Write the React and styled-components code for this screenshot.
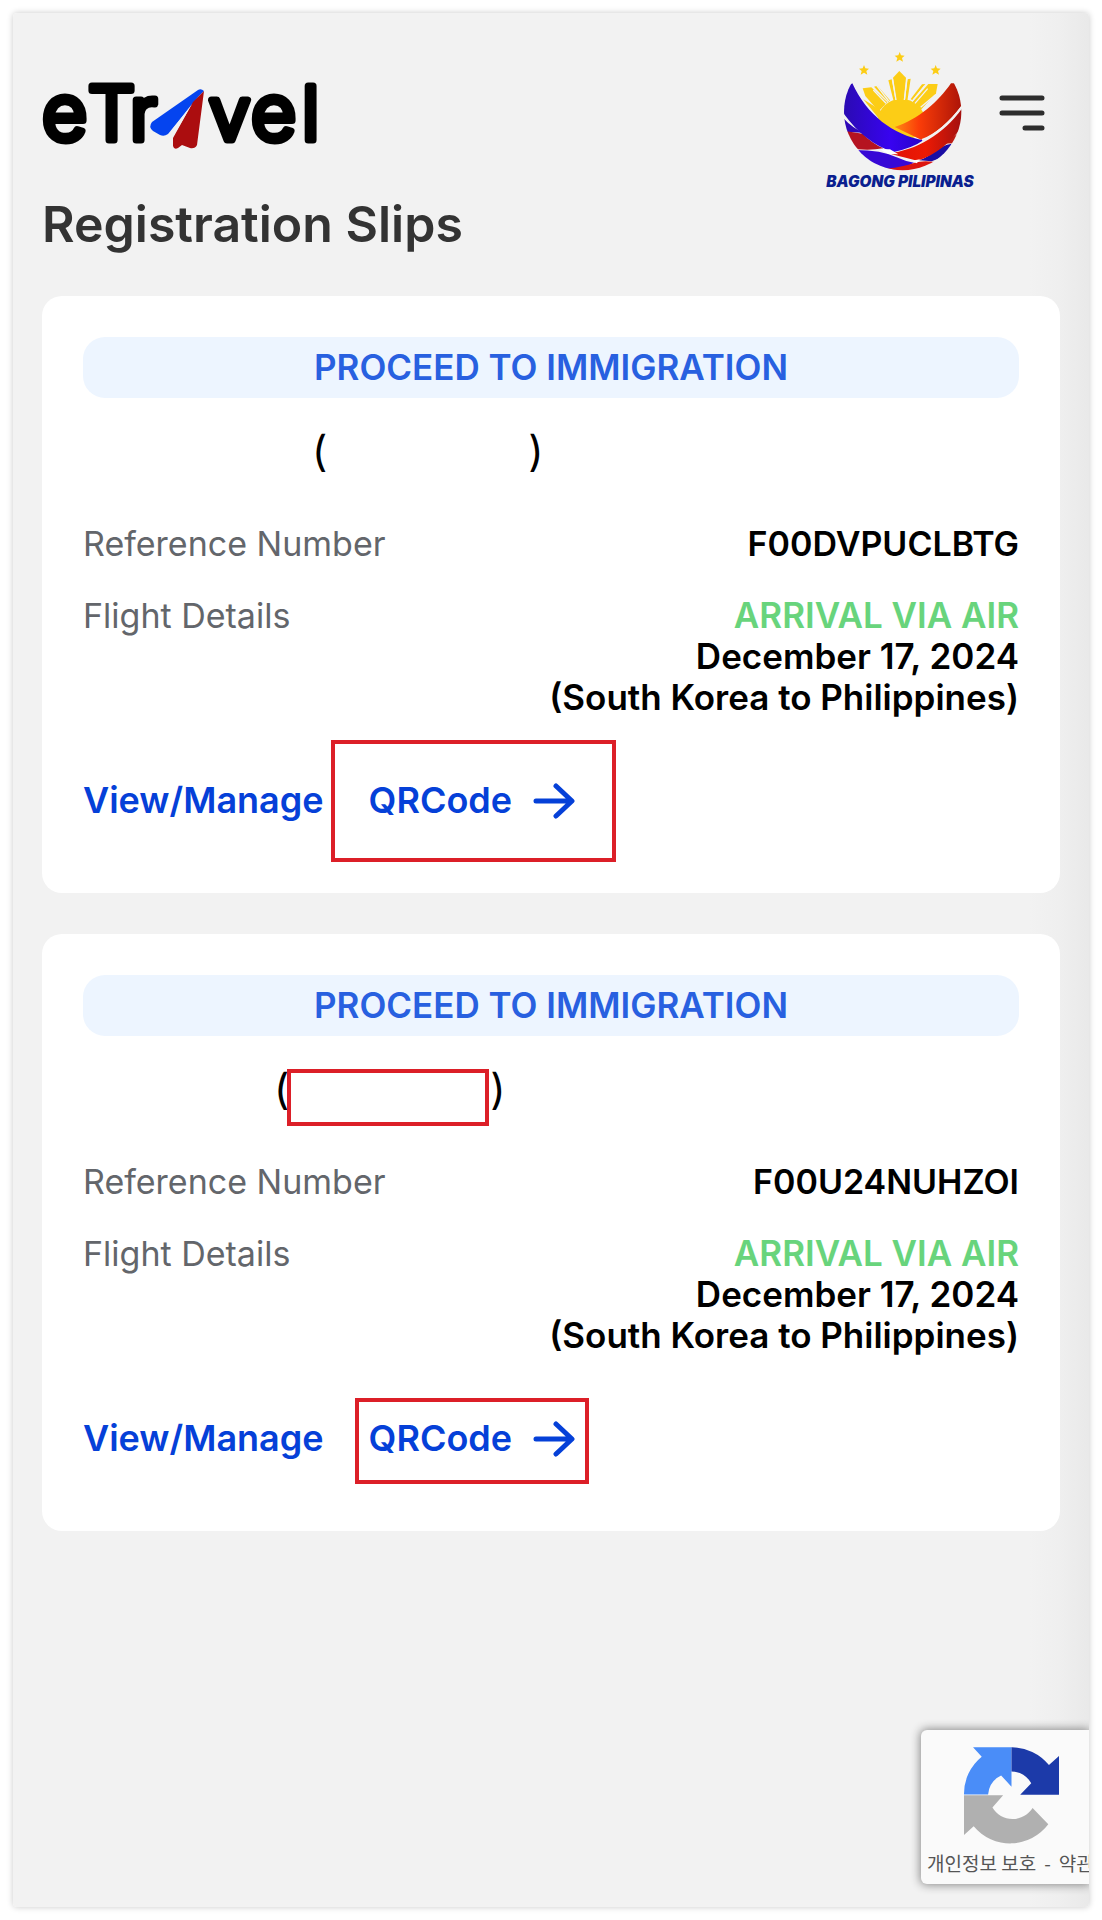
import React from 'react';
import styled, { createGlobalStyle } from 'styled-components';

const GlobalStyle = createGlobalStyle`
  *, *::before, *::after {
    box-sizing: border-box;
  }

  body {
    margin: 0;
    background: #fff;
    color: #000;
    font-family: Inter, "Noto Sans CJK KR", sans-serif;
  }

  h1, h2, p, dl, dt, dd {
    margin: 0;
  }
`;

const Screen = styled.div`
  position: relative;
  min-height: calc(100vh - 26px);
  margin: 13px;
  padding: 39px 29px;
  overflow: hidden;
  background: linear-gradient(to left, #e9e9e9, #efefef 30px, #f2f2f2 60px);
`;

const Page = styled.div`
  display: flow-root;

  ${Screen} {
    border-radius: 4px;
    box-shadow: 0 0 6px rgba(0, 0, 0, 0.22);
  }
`;

const Header = styled.header`
  display: flex;
  align-items: center;
  justify-content: space-between;
`;

const HeaderRight = styled.div`
  display: flex;
  align-items: center;
  gap: 23px;
  padding-right: 15px;
`;

const HomeLink = styled.a`
  display: block;

  svg {
    display: block;
    overflow: visible;
  }
`;

const LogoText = styled.text`
  font-family: Inter, sans-serif;
  font-size: ${({ $size }) => $size}px;
  font-weight: 300;
  fill: #000;
  stroke: #000;
  stroke-width: 7px;
  stroke-linejoin: round;
`;

const EmblemText = styled.text`
  font-family: Inter, sans-serif;
  font-size: 46px;
  font-style: italic;
  font-weight: 900;
  fill: #0b1f8f;
`;

const MenuButton = styled.button`
  padding: 0 0 16px;
  border: 0;
  background: none;
  cursor: pointer;

  svg {
    display: block;
  }
`;

const Title = styled.h1`
  margin: 4px 0 42px;
  color: #333;
  font-size: 50px;
  font-weight: 600;
  line-height: 60px;
`;

const SlipList = styled.main`
  display: flex;
  flex-direction: column;
  gap: 41px;
`;

const Card = styled.article`
  padding: 41px;
  border-radius: 20px;
  background: #fff;
`;

const Status = styled.p`
  padding: 10px;
  border-radius: 22px;
  background: #edf5ff;
  color: #2860e0;
  font-size: 35px;
  font-weight: 600;
  line-height: 41px;
  text-align: center;
`;

const Name = styled.h2`
  display: flex;
  margin: 29px 0 48px;
  font-size: 42px;
  font-weight: 400;
  line-height: 48px;
`;

const NameBlank = styled.span`
  flex: 0 0 ${({ $width }) => $width}px;
`;

const PassportBlank = styled.span`
  position: relative;
  flex: 0 0 201px;
`;

const Mark = styled.span`
  position: absolute;
  inset: ${({ $inset }) => $inset};
  border: 4px solid #dc1f28;
  pointer-events: none;
`;

const Details = styled.dl`
  display: flex;
  flex-direction: column;
  gap: 31px;
`;

const DetailRow = styled.div`
  display: flex;
  justify-content: space-between;
  font-size: 34px;
  line-height: 41px;
`;

const Label = styled.dt`
  color: #63666b;
`;

const Value = styled.dd`
  font-size: ${({ $code }) => ($code ? 34 : 35)}px;
  font-weight: 600;
  text-align: right;
`;

const Arrival = styled.p`
  color: #68d47c;
`;

const Actions = styled.nav`
  display: flex;
  gap: 45px;
  margin-top: 31px;
  padding: 31px 0;
`;

const ActionLink = styled.a`
  position: relative;
  display: flex;
  align-items: center;
  gap: 21px;
  color: #0540d8;
  font-size: 36px;
  font-weight: 600;
  line-height: 41px;
  text-decoration: none;
`;

const CaptchaBadge = styled.aside`
  position: absolute;
  right: 0;
  bottom: 23px;
  width: 168px;
  height: 154px;
  padding: 16px 0 0 6px;
  border-radius: 6px 0 0 6px;
  background: #fafafa;
  box-shadow: 0 0 10px 1px #888;
  overflow: hidden;
  white-space: nowrap;

  svg {
    display: block;
    margin-left: 36px;
  }
`;

const CaptchaLinks = styled.p`
  display: flex;
  gap: 8px;
  margin-top: 3px;
  color: #555;
  font-family: "Noto Sans CJK KR", sans-serif;
  font-size: 19px;
  line-height: 30px;

  a {
    color: inherit;
    text-decoration: none;
  }
`;

const Logo = () => (
    <svg width="280" height="124" viewBox="42 59 280 124" role="img" aria-label="eTravel">
        <LogoText $size={78} x="42" y="140">e</LogoText>
        <LogoText $size={74} x="88 130" y="140">Tr</LogoText>
        <path d="M198 90Q201 88 204 91L199 96L168 134Q164 137 160 135L153 131Q148 127 152 122Z" fill="#0544ef" />
        <path d="M204 91L197 145Q195 149 190 148L182 145L178 148Q174 150 173 146V138L193 102Z" fill="#ab0d0f" />
        <path d="M192 104L174 135L171 131Z" fill="#f2f2f2" />
        <LogoText $size={74} x="209" y="140">v</LogoText>
        <LogoText $size={78} x="251" y="140">e</LogoText>
        <LogoText $size={74} x="302" y="140">l</LogoText>
    </svg>
);

const starPoints = '0,-15 4,-5 15,-4 7,3 10,14 0,8 -10,14 -7,3 -15,-4 -4,-5';

const Emblem = () => (
    <svg width="150" height="138" viewBox="78 36 450 414" role="img" aria-label="Bagong Pilipinas">
        <defs>
            <clipPath id="bowl">
                <circle cx="308" cy="215" r="176" />
            </clipPath>
            <linearGradient id="flame" x1="0" x2="1">
                <stop offset="0" stopColor="#ff8a14" />
                <stop offset="0.35" stopColor="#fb3d08" />
                <stop offset="1" stopColor="#a91208" />
            </linearGradient>
            <linearGradient id="blueBand" x1="0" x2="1">
                <stop offset="0" stopColor="#2a0bb0" />
                <stop offset="0.6" stopColor="#3803f0" />
                <stop offset="1" stopColor="#2604c8" />
            </linearGradient>
            <linearGradient id="redBand" x1="0" x2="1">
                <stop offset="0" stopColor="#e01208" />
                <stop offset="0.5" stopColor="#ec1a04" />
                <stop offset="1" stopColor="#a01010" />
            </linearGradient>
        </defs>
        <g fill="#fccd16">
            <polygon points={starPoints} transform="translate(299 51)" />
            <polygon points={starPoints} transform="translate(192 90)" />
            <polygon points={starPoints} transform="translate(407 90)" />
            <path d="M298 93L318 113L311 185H289L279 113Z" />
            <path d="M322 118L332 116L322 184H315ZM265 121L275 118L287 184H281Z" />
            <path d="M188 145L214 142L262 187L236 214L196 168Z" />
            <path d="M222 140L232 137L270 181L265 186Z" />
            <path d="M413 132L385 132L338 185L362 210L408 160Z" />
            <path d="M366 133L376 132L337 181L332 177Z" />
            <ellipse cx="304" cy="240" rx="70" ry="63" />
            <path d="M190 178L235 206L300 262L240 240Z" />
        </g>
        <path d="M228 134L266 183M220 150L258 190M278 118L288 180M321 117L313 180M374 138L336 184M383 146L345 190M405 166L362 202" stroke="#f2f2f2" strokeWidth="4" />
        <g clipPath="url(#bowl)">
            <path d="M125 220L280 330H450L490 250V400H125Z" fill="#f2f2f2" />
            <path d="M453 130L490 130V190C450 245 405 282 365 300L284 261C355 239 415 185 453 130Z" fill="url(#flame)" />
            <path d="M125 228Q150 260 190 278L145 276L125 270Z" fill="#2f08b8" />
            <path d="M140 274L188 281Q215 309 250 325Q212 332 174 328L140 300Z" fill="#b51320" />
            <path d="M165 330Q245 330 290 352Q315 364 342 368Q310 388 260 390L165 370Z" fill="#3708d6" />
            <path d="M260 386Q310 380 344 368Q370 360 405 366L350 410H260Z" fill="#dc1510" />
            <path d="M358 361C395 348 415 317 455 311L445 345L395 364Z" fill="#1a0da4" />
            <path d="M420 311Q445 302 475 280L465 310Z" fill="#bc1b12" />
            <path d="M490 200V255C455 305 410 345 352 362Q320 355 265 340C350 332 435 280 490 200Z" fill="url(#redBand)" />
            <path d="M157 130C200 225 280 285 370 301Q340 323 282 336C218 318 165 270 125 212V150Z" fill="url(#blueBand)" />
            <path d="M487 198Q430 275 366 300" fill="none" stroke="#f2f2f2" strokeWidth="6" />
            <path d="M240 328L270 328L295 343L265 342Z" fill="#fff" />
            <path d="M335 362L360 358L350 370Z" fill="#fff" />
        </g>
        <EmblemText x="79" y="441">BAGONG PILIPINAS</EmblemText>
    </svg>
);

const MenuIcon = () => (
    <svg width="46" height="36" viewBox="0 0 46 36" stroke="#2d2d2d" strokeWidth="5" strokeLinecap="round" aria-hidden="true">
        <path d="M3 3H43M3 18H43M26 33H43" />
    </svg>
);

const ArrowIcon = () => (
    <svg width="42" height="36" viewBox="0 0 42 36" fill="none" stroke="currentColor" strokeWidth="5" strokeLinecap="round" strokeLinejoin="round" aria-hidden="true">
        <path d="M3 18H38M23 3L39 18L23 33" />
    </svg>
);

const CaptchaIcon = () => (
    <svg width="97" height="99" viewBox="190 106 290 296" aria-hidden="true">
        <path d="M193 251A142 142 0 0 1 246 138L220 110H335V228L304 194A70 70 0 0 0 265 251Z" fill="#4a8df8" />
        <path d="M335 110A142 142 0 0 1 447 163L477 136V252H361L394 217A72 72 0 0 0 335 182Z" fill="#1c3aa9" />
        <path d="M193 253H310L278 290A70 70 0 0 0 398 291L445 340A142 142 0 0 1 222 346L193 372Z" fill="#b0b0b0" />
    </svg>
);

const slips = [
    { reference: 'F00DVPUCLBTG', nameWidth: 229, nameMarked: false, qrMark: '-40px -41px -41px -38px' },
    { reference: 'F00U24NUHZOI', nameWidth: 191, nameMarked: true, qrMark: '-20px -14px -25px -14px' },
];

const Slip = ({ reference, nameWidth, nameMarked, qrMark }) => (
    <Card>
        <Status>PROCEED TO IMMIGRATION</Status>
        <Name>
            <NameBlank $width={nameWidth} />
            (
            <PassportBlank>{nameMarked && <Mark $inset="4px 1px -13px -2px" />}</PassportBlank>
            )
        </Name>
        <Details>
            <DetailRow>
                <Label>Reference Number</Label>
                <Value $code>{reference}</Value>
            </DetailRow>
            <DetailRow>
                <Label>Flight Details</Label>
                <Value>
                    <Arrival>ARRIVAL VIA AIR</Arrival>
                    <p>December 17, 2024</p>
                    <p>(South Korea to Philippines)</p>
                </Value>
            </DetailRow>
        </Details>
        <Actions>
            <ActionLink href="#manage">View/Manage</ActionLink>
            <ActionLink href="#qrcode">
                QRCode
                <ArrowIcon />
                <Mark $inset={qrMark} />
            </ActionLink>
        </Actions>
    </Card>
);

const App = () => {
    return(
        <>
            <GlobalStyle />
            <Page>
                <Screen>
                    <Header>
                        <HomeLink href="#home"><Logo /></HomeLink>
                        <HeaderRight>
                            <Emblem />
                            <MenuButton type="button" aria-label="Menu"><MenuIcon /></MenuButton>
                        </HeaderRight>
                    </Header>
                    <Title>Registration Slips</Title>
                    <SlipList>
                        {slips.map((slip) => <Slip key={slip.reference} {...slip} />)}
                    </SlipList>
                    <CaptchaBadge>
                        <CaptchaIcon />
                        <CaptchaLinks>
                            <a href="#privacy">개인정보 보호</a>
                            <span>-</span>
                            <a href="#terms">약관</a>
                        </CaptchaLinks>
                    </CaptchaBadge>
                </Screen>
            </Page>
        </>
    )
}

export default App;
